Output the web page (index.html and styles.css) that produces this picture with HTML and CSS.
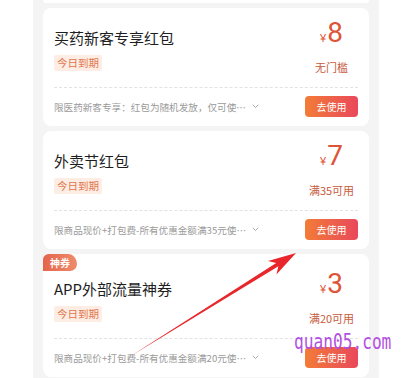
FILE: index.html
```html
<!DOCTYPE html>
<html lang="zh-CN">
<head>
<meta charset="utf-8">
<title>红包</title>
<link rel="stylesheet" href="styles.css">
</head>
<body>
<div class="page">
  <div class="panel">
    <div class="prev-card"></div>

    <div class="card">
      <div class="card-top">
        <div class="info">
          <div class="title">买药新客专享红包</div>
          <span class="tag">今日到期</span>
        </div>
        <div class="value">
          <div class="amount"><span class="yen">¥</span><span class="num">8</span></div>
          <div class="cond">无门槛</div>
        </div>
      </div>
      <div class="card-bottom">
        <div class="desc"><span>限医药新客专享：红包为随机发放，仅可使…</span><svg class="chev" width="7" height="5" viewBox="0 0 7 5"><path d="M0.8 0.8 L3.5 3.6 L6.2 0.8" fill="none" stroke="#aaa" stroke-width="1"/></svg></div>
        <button class="use-btn">去使用</button>
      </div>
    </div>

    <div class="card">
      <div class="card-top">
        <div class="info">
          <div class="title">外卖节红包</div>
          <span class="tag">今日到期</span>
        </div>
        <div class="value">
          <div class="amount"><span class="yen">¥</span><span class="num">7</span></div>
          <div class="cond">满35可用</div>
        </div>
      </div>
      <div class="card-bottom">
        <div class="desc"><span>限商品现价+打包费-所有优惠金额满35元使…</span><svg class="chev" width="7" height="5" viewBox="0 0 7 5"><path d="M0.8 0.8 L3.5 3.6 L6.2 0.8" fill="none" stroke="#aaa" stroke-width="1"/></svg></div>
        <button class="use-btn">去使用</button>
      </div>
    </div>

    <div class="card card-badged">
      <span class="badge">神券</span>
      <div class="card-top">
        <div class="info">
          <div class="title">APP外部流量神券</div>
          <span class="tag">今日到期</span>
        </div>
        <div class="value">
          <div class="amount"><span class="yen">¥</span><span class="num">3</span></div>
          <div class="cond">满20可用</div>
        </div>
      </div>
      <div class="card-bottom">
        <div class="desc"><span>限商品现价+打包费-所有优惠金额满20元使…</span><svg class="chev" width="7" height="5" viewBox="0 0 7 5"><path d="M0.8 0.8 L3.5 3.6 L6.2 0.8" fill="none" stroke="#aaa" stroke-width="1"/></svg></div>
        <button class="use-btn">去使用</button>
      </div>
    </div>
  </div>

  <svg class="arrow" width="407" height="378" viewBox="0 0 407 378">
    <polygon points="130,356.5 278.4,266.3 276.4,274.6 296,253 268,261 276.2,262.9" fill="#e8262b"/>
  </svg>
  <div class="watermark">quan05.com</div>
</div>
</body>
</html>
```

FILE: styles.css
```css
* {
  box-sizing: border-box;
}

html, body {
  margin: 0;
  padding: 0;
  background: #ffffff;
}

body {
  font-family: "Noto Sans CJK SC", "Noto Sans", sans-serif;
  color: #222;
}

.page {
  position: relative;
  width: 407px;
  height: 378px;
  overflow: hidden;
}

.panel {
  margin-left: 33px;
  width: 346px;
  height: 378px;
  padding: 0 10px;
  background: #f4f4f4;
  display: flex;
  flex-direction: column;
  gap: 5px;
  overflow: hidden;
}

.prev-card {
  flex: none;
  height: 3px;
  background: #fff;
  border-radius: 0 0 8px 8px;
}

.card {
  position: relative;
  flex: none;
  background: #fff;
  border-radius: 8px;
  padding: 0 11px 9px;
}

.card-top {
  display: flex;
  justify-content: space-between;
  align-items: flex-start;
  height: 80px;
  padding-top: 10px;
  border-bottom: 1px dashed #e2e2e2;
}

.card-badged .card-top {
  height: 85px;
  padding-top: 15px;
}

.info {
  display: flex;
  flex-direction: column;
  align-items: flex-start;
}

.title {
  margin-top: 9px;
  font-size: 15px;
  line-height: 22px;
  color: #1e1e1e;
}

.tag {
  margin-top: 6px;
  height: 16px;
  padding: 0 3px;
  font-size: 10.5px;
  line-height: 16px;
  color: #e2764e;
  background: #fdede4;
  border-radius: 2px;
}

.value {
  width: 53px;
  display: flex;
  flex-direction: column;
  align-items: center;
}

.amount {
  display: flex;
  align-items: baseline;
  line-height: 30px;
  color: #de5437;
}

.yen {
  font-family: "Liberation Sans", sans-serif;
  font-size: 11px;
  margin-right: 1px;
}

.num {
  font-family: Roboto, "Liberation Sans", sans-serif;
  font-size: 28px;
  line-height: 30px;
}

.cond {
  margin-top: 6px;
  font-size: 11px;
  line-height: 16px;
  color: #c85a3e;
  white-space: nowrap;
}

.card-bottom {
  display: flex;
  justify-content: space-between;
  align-items: center;
  padding-top: 8px;
}

.desc {
  display: flex;
  align-items: center;
  gap: 6px;
  font-size: 9.6px;
  line-height: 14px;
  color: #9a9a9a;
  white-space: nowrap;
}

.chev {
  display: block;
}

.use-btn {
  width: 53px;
  height: 21px;
  padding: 0;
  border: none;
  border-radius: 4px;
  background: linear-gradient(90deg, #f27c37 0%, #e9485b 100%);
  color: #fff;
  font-family: "Noto Sans CJK SC", sans-serif;
  font-size: 10px;
  line-height: 21px;
}

.badge {
  position: absolute;
  left: 0;
  top: 0;
  width: 34px;
  height: 17px;
  background: linear-gradient(90deg, #e4644b 0%, #ef8b6c 100%);
  border-radius: 8px 12px 10px 0 / 8px 14px 10px 0;
  color: #fff;
  font-size: 10px;
  font-weight: bold;
  line-height: 17px;
  text-align: center;
}

.arrow {
  position: absolute;
  left: 0;
  top: 0;
  pointer-events: none;
}

.watermark {
  position: absolute;
  left: 294px;
  top: 330px;
  font-family: "DejaVu Sans Mono", "Liberation Mono", monospace;
  font-size: 21px;
  line-height: 24px;
  color: #b34fe2;
  transform: scaleX(0.77);
  transform-origin: left top;
  white-space: nowrap;
}
```
